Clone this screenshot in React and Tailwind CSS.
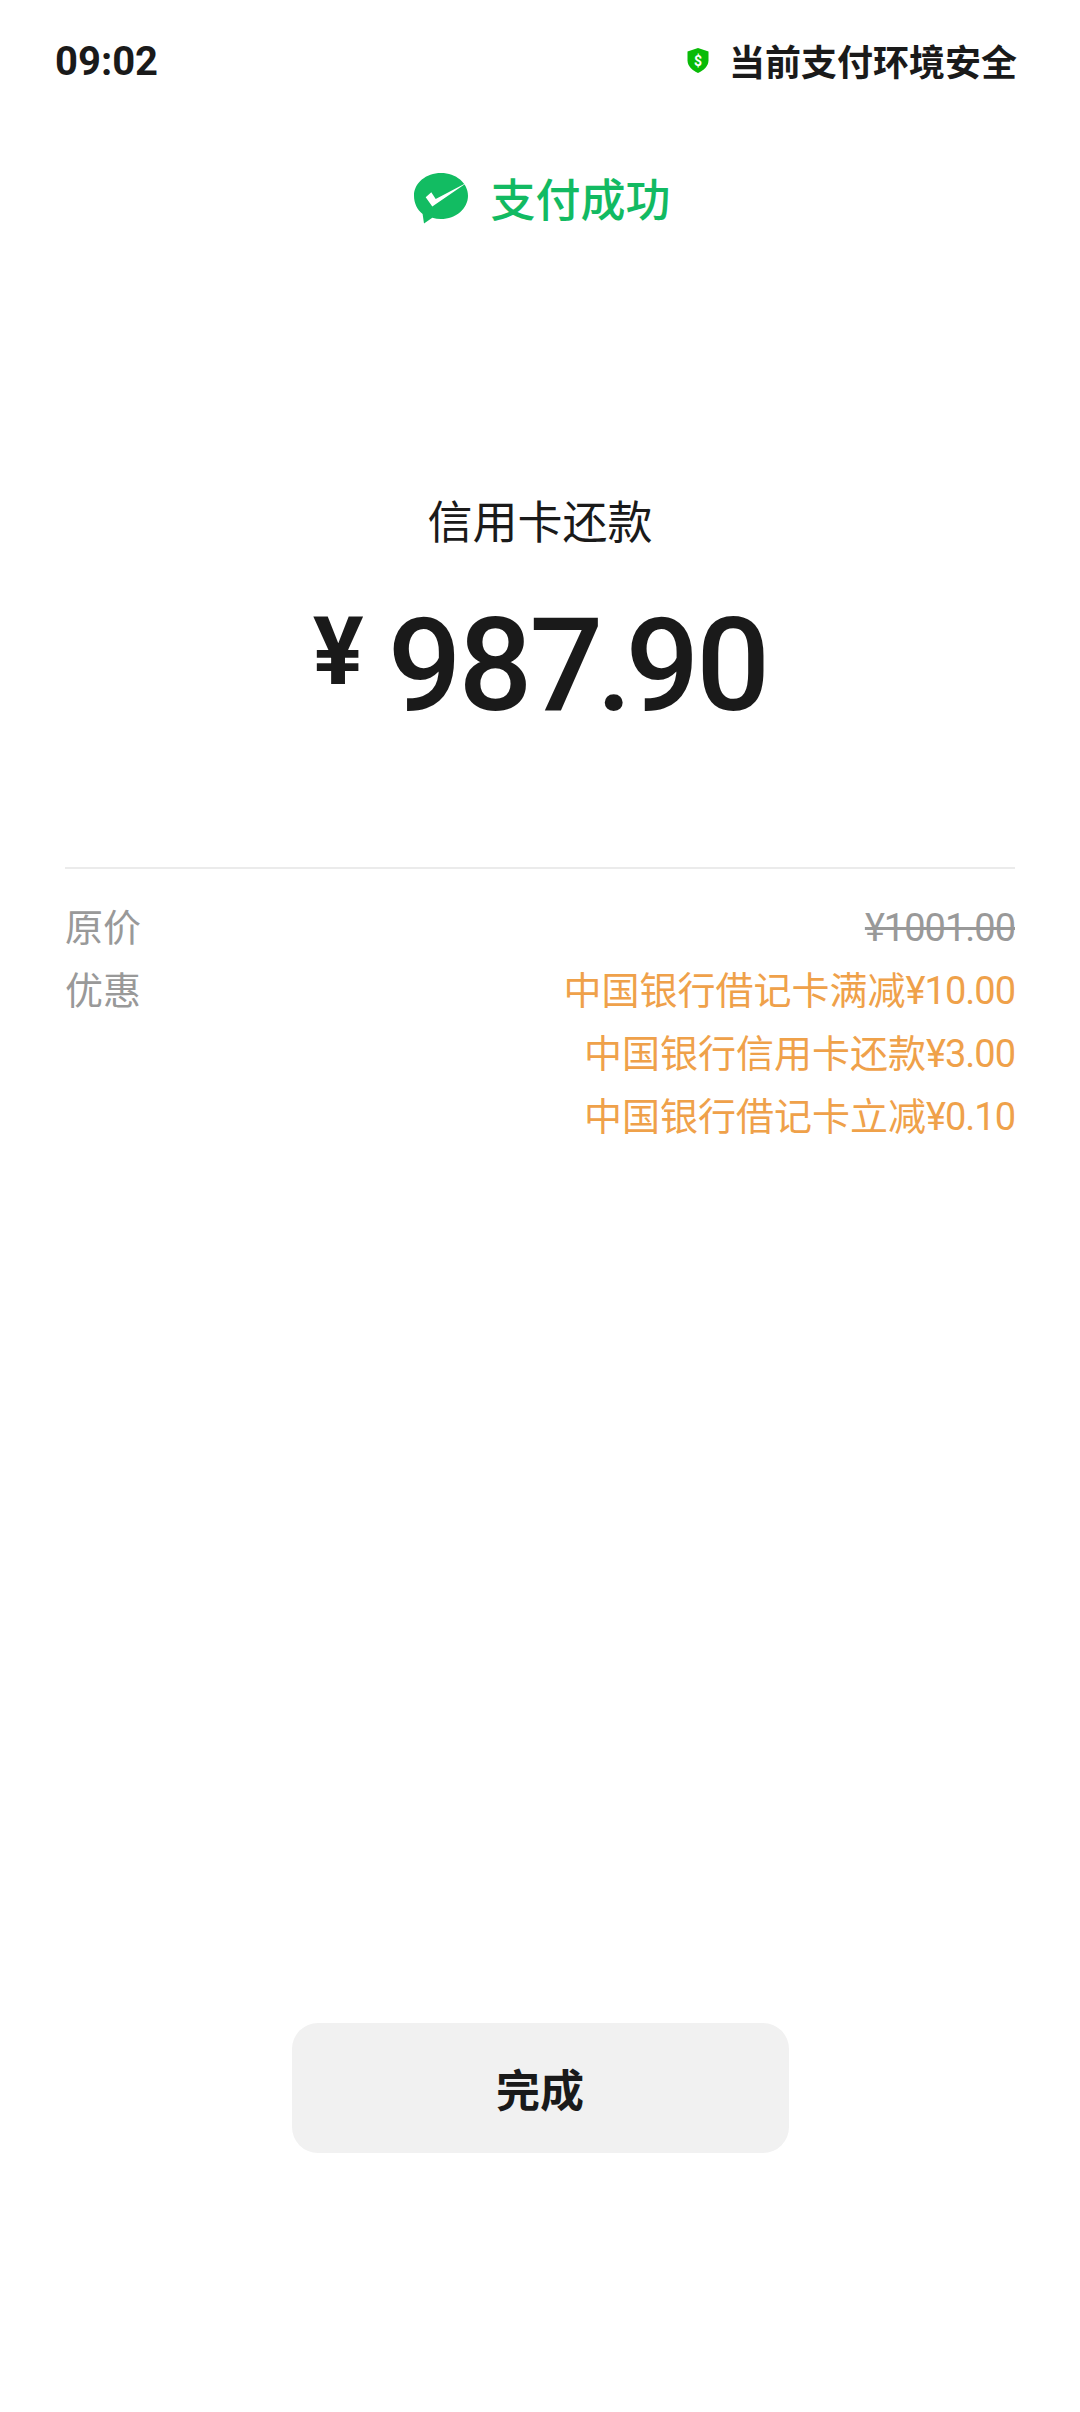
import React from 'react';

const cjk = 'font-["Noto_Sans_CJK_SC","Noto_Sans",sans-serif]';

// Small green shield next to the status text
const ShieldIcon = () => (
    <svg width="22" height="25" viewBox="0 0 22 25">
        <path d="M11 0 L21.5 3.5 V12.5 C21.5 18 16.5 22.5 11 25 C5.5 22.5 0.5 18 0.5 12.5 V3.5 Z" fill="#09BB07" />
        <text x="11" y="17.5" textAnchor="middle" fontSize="14" fontWeight="700" fill="#fff" fontFamily="Roboto, sans-serif">$</text>
    </svg>
);

// WeChat pay bubble with a tick
const PayLogo = () => (
    <svg width="54" height="51" viewBox="0 0 54 51">
        <path d="M27 0 C42 0 54 10 54 22.7 C54 35.4 42 46 27 46 C24 46 21 45.6 18.3 44.8 L10 50.5 L8.6 41 C3.4 36.8 0 30.2 0 22.7 C0 10 12 0 27 0 Z" fill="#12BC62" />
        <path d="M11.7 24.3 L17.3 19.3 L21.7 26 L54 9 L18.3 33.5 Z" fill="#fff" />
    </svg>
);

const discounts = [
    ['中国银行借记卡满减', '¥10.00'],
    ['中国银行信用卡还款', '¥3.00'],
    ['中国银行借记卡立减', '¥0.10'],
];

const App = () => {
    return (
        <div className={`w-[1080px] h-[2412px] bg-white flex flex-col overflow-hidden text-[#1a1a1a] ${cjk}`}>
            {/* Status row */}
            <div className="flex items-center justify-between pl-[55px] pr-[63px] pt-[34px] h-[86px]">
                <span className="font-['Roboto',sans-serif] font-bold text-[40px] leading-[50px] mt-[4px]">09:02</span>
                <div className="flex items-center gap-[20px]">
                    <ShieldIcon />
                    <span className="text-[36px] font-bold leading-[50px]">当前支付环境安全</span>
                </div>
            </div>

            {/* Success title */}
            <div className="flex items-center justify-center gap-[22px] mt-[84px] h-[56px] pl-[5px]">
                <PayLogo />
                <span className="text-[45px] font-medium leading-[56px] text-[#12BA62]">支付成功</span>
            </div>

            {/* Amount */}
            <div className="flex flex-col items-center mt-[264px]">
                <div className="text-[45px] leading-[60px]">信用卡还款</div>
                <div className="flex items-baseline justify-center mt-[46px] h-[140px] font-['Roboto',sans-serif] font-medium">
                    <span className="text-[95px] font-bold mr-[24px] relative top-[-26px]">¥</span>
                    <span className="text-[130px] leading-[140px] tracking-[-3px]">
                        987<span className="mx-[-4px]">.</span>90
                    </span>
                </div>
            </div>

            {/* Price details */}
            <div className="mt-[131px] mx-[65px] border-t-2 border-[#ebebeb] pt-[24px] flex flex-col">
                <div className="flex justify-between items-baseline h-[63px] leading-[63px] text-[38px] text-[#999999]">
                    <span>原价</span>
                    <span className="line-through font-['Roboto',sans-serif] tracking-[-1px]">¥1001.00</span>
                </div>
                <div className="flex justify-between text-[38px]">
                    <span className="text-[#999999] leading-[63px]">优惠</span>
                    <div className="flex flex-col items-end text-[#EFA14A]">
                        {discounts.map(([name, amount]) => (
                            <div key={name} className="h-[63px] leading-[63px] flex items-baseline">
                                <span>{name}</span>
                                <span className="font-['Roboto',sans-serif] tracking-[-1px]">{amount}</span>
                            </div>
                        ))}
                    </div>
                </div>
            </div>

            {/* Done button */}
            <div className="mt-auto mb-[259px] flex justify-center">
                <button className="w-[497px] h-[130px] rounded-[26px] bg-[#f1f1f1] text-[44px] font-bold">完成</button>
            </div>
        </div>
    );
};

export default App;
